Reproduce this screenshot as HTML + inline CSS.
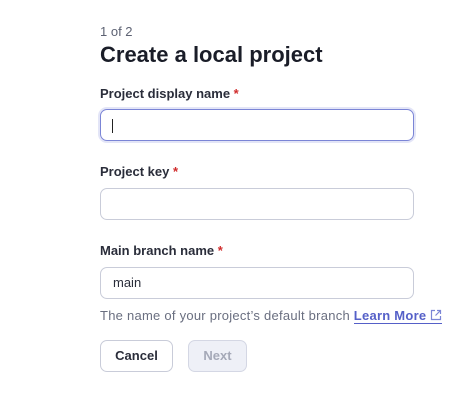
<!DOCTYPE html>
<html><head><style>
body{margin:0;width:474px;height:412px;background:#fff;font-family:"Liberation Sans",sans-serif;color:#1f2330;position:relative}
.a{position:absolute}
.step{left:100px;top:24px;font-size:13px;color:#5d6273}
h1{position:absolute;left:100px;top:42px;margin:0;font-size:22px;font-weight:bold;color:#1a1d28}
.lab{left:100px;font-size:13px;font-weight:bold;color:#2a2d3a}
.lab span{color:#d02b2b}
.in{left:100px;width:314px;height:31px;border:1px solid #c9ccd9;border-radius:7px;box-sizing:border-box}
.foc{border:1.5px solid #7b85d6;box-shadow:0 0 0 2px #e3e5f7}
.btn{top:340px;height:32px;border-radius:7px;box-sizing:border-box;font-size:13px;font-weight:bold;text-align:center;line-height:30px}
</style></head><body>
<div class="a step">1 of 2</div>
<h1>Create a local project</h1>
<div class="a lab" style="top:86px">Project display name <span>*</span></div>
<div class="a in foc" style="top:109px;width:314px;height:32px"><div class="a" style="left:11px;top:9px;width:1px;height:14px;background:#222"></div></div>
<div class="a lab" style="top:164px">Project key <span>*</span></div>
<div class="a in" style="top:188px;height:32px"></div>
<div class="a lab" style="top:243px">Main branch name <span>*</span></div>
<div class="a in" style="top:267px;height:32px;font-size:13px;line-height:30px;padding-left:12px;color:#2a2d3a">main</div>
<div class="a" style="left:100px;top:308px;font-size:13px;letter-spacing:0.25px;color:#6a6f80;white-space:nowrap">The name of your project’s default branch <span style="color:#5560c8;font-weight:bold;border-bottom:1px solid #5560c8">Learn More <svg width="12" height="12" viewBox="0 0 12 12" style="vertical-align:-1px"><path d="M5 1.5H1.5v9h9V7M7 1.5h3.5V5M10.5 1.5L5.5 6.5" fill="none" stroke="#7b85d6" stroke-width="1.2"/></svg></span></div>
<div class="a btn" style="left:100px;width:73px;border:1px solid #c9ccd9;color:#2a2d3a">Cancel</div>
<div class="a btn" style="left:188px;width:59px;border:1px solid #d4d7e4;background:#eef0f7;color:#a5a9b8">Next</div>
</body></html>
